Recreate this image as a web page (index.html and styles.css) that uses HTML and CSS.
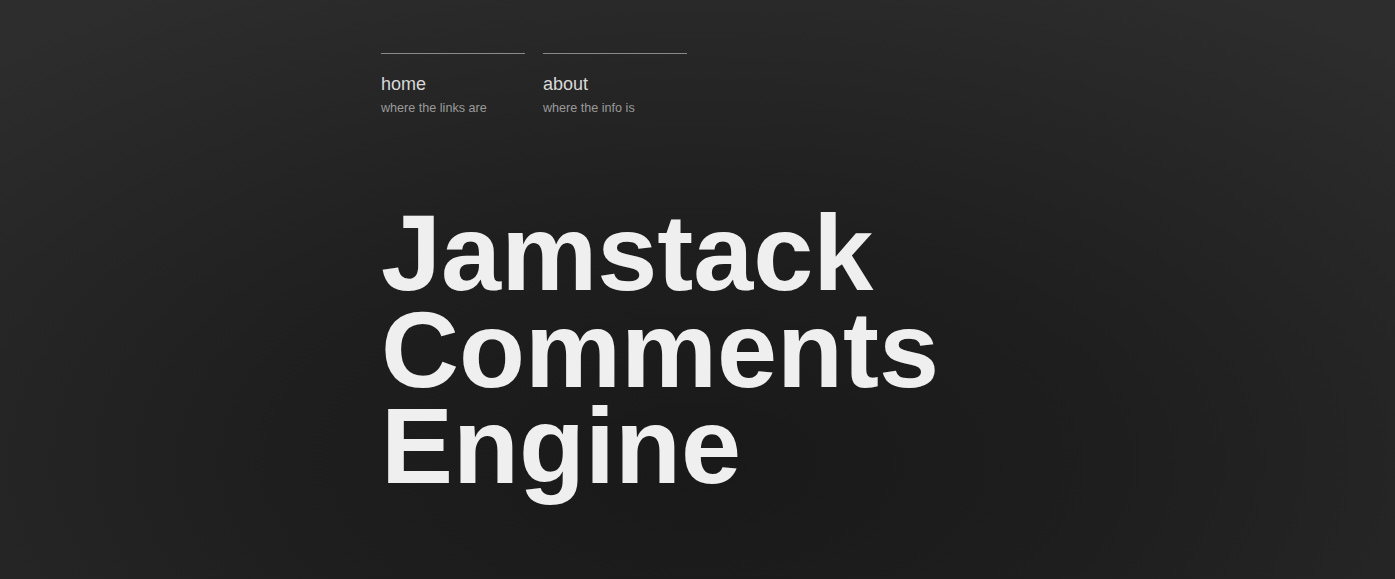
FILE: index.html
```html
<!DOCTYPE html>
<html lang="en">
<head>
<meta charset="utf-8">
<title>Jamstack Comments Engine</title>
<link rel="stylesheet" href="styles.css">
</head>
<body>
<div class="page">
  <nav class="nav">
    <a class="nav-item" href="#">
      <span class="nav-title">home</span>
      <span class="nav-sub">where the links are</span>
    </a>
    <a class="nav-item" href="#">
      <span class="nav-title">about</span>
      <span class="nav-sub">where the info is</span>
    </a>
  </nav>
  <h1 class="headline">Jamstack<br>Comments<br>Engine</h1>
</div>
</body>
</html>
```
FILE: styles.css
```css
html, body {
  margin: 0;
  padding: 0;
  height: 100%;
}
body {
  background: radial-gradient(ellipse 75% 95% at 50% 80%, #191919 0%, #1e1e1e 40%, #2d2d2d 100%);
  font-family: "Liberation Sans", Arial, Helvetica, sans-serif;
  color: #efefef;
  overflow: hidden;
}
.page {
  padding: 53px 0 0 381px;
}
.nav {
  display: flex;
  gap: 18px;
}
.nav-item {
  display: flex;
  flex-direction: column;
  width: 144px;
  border-top: 1px solid #8a8a8a;
  text-decoration: none;
  padding-top: 19px;
}
.nav-title {
  font-size: 18px;
  line-height: 22px;
  color: #d8d8d8;
}
.nav-sub {
  font-size: 12.6px;
  line-height: 16px;
  margin-top: 5px;
  color: #9a9a9a;
}
.headline {
  margin: 89px 0 0 0;
  font-size: 108px;
  line-height: 96.5px;
  font-weight: 700;
  color: #efefef;
}
```
